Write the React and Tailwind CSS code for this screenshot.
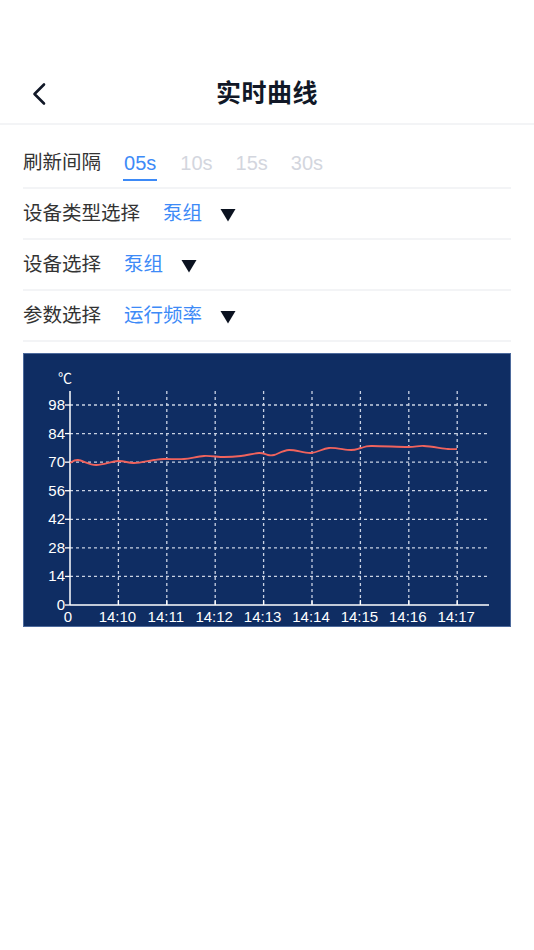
import React from 'react';

const FONT = { fontFamily: '"Liberation Sans", "Noto Sans CJK SC", sans-serif' };

const Y_TICKS = [0, 14, 28, 42, 56, 70, 84, 98];
const X_TICKS = ['14:10', '14:11', '14:12', '14:13', '14:14', '14:15', '14:16', '14:17'];

// chart geometry, in px inside the panel
const X0 = 46;
const Y0 = 251;
const X_STEP = 48.4;
const Y_STEP = 28.57;
const X_END = 465;
const Y_TOP = 37;

const POINTS = [
  [46, 109], [54, 106], [72, 111], [94, 107], [110, 109], [130, 106], [140, 105],
  [160, 105], [180, 102], [200, 103], [217, 102], [235, 99], [244, 101], [250, 101],
  [265, 96], [287, 99], [305, 94], [327, 96], [337, 94], [347, 92], [384, 93],
  [400, 92], [424, 95], [433, 95],
];

function smoothPath(pts) {
  let d = `M${pts[0][0]},${pts[0][1]}`;
  for (let i = 0; i < pts.length - 1; i++) {
    const p0 = pts[i - 1] || pts[i];
    const p1 = pts[i];
    const p2 = pts[i + 1];
    const p3 = pts[i + 2] || p2;
    const c1x = p1[0] + (p2[0] - p0[0]) / 6;
    const c1y = p1[1] + (p2[1] - p0[1]) / 6;
    const c2x = p2[0] - (p3[0] - p1[0]) / 6;
    const c2y = p2[1] - (p3[1] - p1[1]) / 6;
    d += ` C${c1x},${c1y} ${c2x},${c2y} ${p2[0]},${p2[1]}`;
  }
  return d;
}

function Caret() {
  return (
    <svg width="16" height="14" viewBox="0 0 16 14" className="shrink-0">
      <polygon points="0.5,1 15.5,1 8,13.5" fill="#0b1220" />
    </svg>
  );
}

function SelectRow({ label, value }) {
  return (
    <div className="flex items-center h-[51px] border-b-2 border-[#f3f4f6]">
      <span className="text-[#333] text-[19.5px]">{label}</span>
      <span className="ml-[23px] text-[#3d8af7] text-[19.5px]">{value}</span>
      <span className="ml-[18px] mt-[2px]">
        <Caret />
      </span>
    </div>
  );
}

function Chart() {
  return (
    <div className="mt-[11px] h-[274px] bg-[#0f2d63] border border-[#4d6a9c]">
      <svg width="100%" height="100%" viewBox="0 0 486 272" className="block">
        <text x="34" y="29" fill="#fff" fontSize="14" style={FONT}>℃</text>
        {Y_TICKS.map((v, i) => {
          const y = Y0 - i * Y_STEP;
          return (
            <g key={v}>
              {i > 0 && (
                <line x1={X0} y1={y} x2={X_END} y2={y} stroke="#c9d2e3" strokeWidth="1.3" strokeDasharray="3 3" />
              )}
              <line x1={X0 - 5} y1={y} x2={X0} y2={y} stroke="#fff" strokeWidth="1.3" />
              <text x={X0 - 5} y={y + 5} fill="#fff" fontSize="15" textAnchor="end" style={FONT}>{v}</text>
            </g>
          );
        })}
        {X_TICKS.map((t, i) => {
          const x = X0 + (i + 1) * X_STEP;
          return (
            <g key={t}>
              <line x1={x} y1={Y_TOP} x2={x} y2={Y0} stroke="#c9d2e3" strokeWidth="1.3" strokeDasharray="3 3" />
              <line x1={x} y1={Y0 - 5} x2={x} y2={Y0} stroke="#fff" strokeWidth="1.3" />
              <text x={x - 1} y={Y0 + 17} fill="#fff" fontSize="15" textAnchor="middle" style={FONT}>{t}</text>
            </g>
          );
        })}
        <text x={X0 - 2} y={Y0 + 17} fill="#fff" fontSize="15" textAnchor="middle" style={FONT}>0</text>
        <line x1={X0} y1={Y_TOP} x2={X0} y2={Y0} stroke="#fff" strokeWidth="1.5" />
        <line x1={X0} y1={Y0} x2={X_END} y2={Y0} stroke="#fff" strokeWidth="1.5" />
        <path d={smoothPath(POINTS)} fill="none" stroke="#f0635d" strokeWidth="1.8" />
      </svg>
    </div>
  );
}

export default function App() {
  return (
    <div className="w-[534px] h-[950px] bg-white" style={FONT}>
      <div className="h-[64px]" />
      <div className="relative h-[61px] flex items-center justify-center border-b-2 border-[#f3f4f6]">
        <button type="button" className="absolute left-[31px] top-[18px] p-0">
          <svg width="16" height="24" viewBox="0 0 16 24">
            <polyline points="13,2.5 3.5,12 13,21.5" fill="none" stroke="#111827" strokeWidth="2.6" strokeLinecap="round" strokeLinejoin="round" />
          </svg>
        </button>
        <h1 className="text-[25px] font-bold text-[#111827] tracking-[0.5px]">实时曲线</h1>
      </div>

      <div className="px-[23px]">
        <div className="mt-[13px] flex items-center h-[51px] border-b-2 border-[#f3f4f6]">
          <span className="text-[#333] text-[19.5px]">刷新间隔</span>
          <div className="ml-[22px] flex items-center gap-[23px] text-[20px]">
            <span className="text-[#3d8af7] border-b-2 border-[#3d8af7] pb-[1px] mt-[3px] px-[1px]">05s</span>
            <span className="text-[#d3d6de]">10s</span>
            <span className="text-[#d3d6de]">15s</span>
            <span className="text-[#d3d6de]">30s</span>
          </div>
        </div>
        <SelectRow label="设备类型选择" value="泵组" />
        <SelectRow label="设备选择" value="泵组" />
        <SelectRow label="参数选择" value="运行频率" />
        <Chart />
      </div>
    </div>
  );
}
